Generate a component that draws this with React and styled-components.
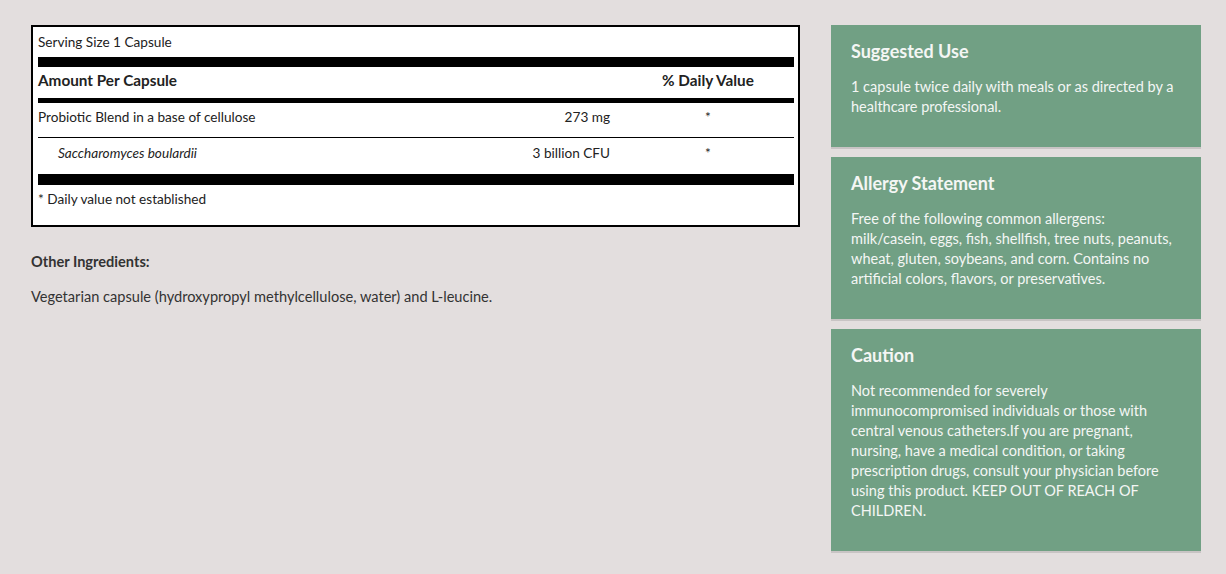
import React from "react";
import styled, { createGlobalStyle } from "styled-components";

const Global = createGlobalStyle`
  html, body { margin: 0; padding: 0; background: #e3dede; }
  body { font-family: Lato, "Open Sans", sans-serif; color: #333; }
  * { box-sizing: border-box; }
`;

const Page = styled.div`
  display: flex;
  align-items: flex-start;
  gap: 31px;
  padding: 25px 25px 20px 31px;
  min-height: 574px;
`;

const Left = styled.div`
  width: 769px;
  flex: none;
`;

const Facts = styled.div`
  border: 2px solid #000;
  background: #fff;
  padding: 0 4px 0 5px;
  color: #222;
  font-size: 13.6px;
`;

const Serving = styled.div`
  height: 30px;
  line-height: 30px;
`;

const Bar = styled.div`
  height: ${(p) => p.$h}px;
  background: #000;
`;

const Row = styled.div`
  display: grid;
  grid-template-columns: 1fr 160px 172px;
  align-items: center;
  height: ${(p) => p.$h}px;
  padding-bottom: ${(p) => p.$pb || 0}px;
  border-bottom: ${(p) => (p.$line ? "1px solid #000" : "none")};
  font-weight: ${(p) => (p.$bold ? 700 : 400)};
  font-size: ${(p) => (p.$bold ? "15.3px" : "inherit")};
`;

const Name = styled.div`
  padding-left: ${(p) => (p.$indent ? 20 : 0)}px;
  font-style: ${(p) => (p.$italic ? "italic" : "normal")};
`;

const Amount = styled.div`
  text-align: right;
  padding-right: 12px;
`;

const DV = styled.div`
  text-align: center;
`;

const Footnote = styled.div`
  padding: 4px 0 16px;
  line-height: 20px;
`;

const OtherTitle = styled.h4`
  margin: 25px 0 0;
  font-size: 14.6px;
  font-weight: 700;
  line-height: 20px;
  color: #333;
`;

const OtherText = styled.p`
  margin: 15px 0 0;
  font-size: 14.6px;
  line-height: 20px;
  color: #333;
`;

const Right = styled.div`
  width: 370px;
  flex: none;
  display: flex;
  flex-direction: column;
  gap: 10px;
`;

const Panel = styled.section`
  background: #71a084;
  box-shadow: 0 2px 0 #c8c4c4;
  padding: 15px 20px 30px;
  color: #f4f6f4;
`;

const PanelTitle = styled.h3`
  margin: 0 0 15px;
  font-size: 18px;
  line-height: 22px;
  font-weight: 700;
`;

const PanelText = styled.p`
  margin: 0;
  font-size: 14.5px;
  line-height: 20px;
`;

export default function App() {
  return (
    <>
      <Global />
      <Page>
        <Left>
          <Facts>
            <Serving>Serving Size 1 Capsule</Serving>
            <Bar $h={10} />
            <Row $h={31} $pb={5} $bold>
              <Name>Amount Per Capsule</Name>
              <Amount />
              <DV>% Daily Value</DV>
            </Row>
            <Bar $h={5} />
            <Row $h={35} $pb={6} $line>
              <Name>Probiotic Blend in a base of cellulose</Name>
              <Amount>273 mg</Amount>
              <DV>*</DV>
            </Row>
            <Row $h={36} $pb={6}>
              <Name $indent $italic>Saccharomyces boulardii</Name>
              <Amount>3 billion CFU</Amount>
              <DV>*</DV>
            </Row>
            <Bar $h={11} />
            <Footnote>* Daily value not established</Footnote>
          </Facts>
          <OtherTitle>Other Ingredients:</OtherTitle>
          <OtherText>
            Vegetarian capsule (hydroxypropyl methylcellulose, water) and L-leucine.
          </OtherText>
        </Left>
        <Right>
          <Panel>
            <PanelTitle>Suggested Use</PanelTitle>
            <PanelText>
              1 capsule twice daily with meals or as directed by a healthcare professional.
            </PanelText>
          </Panel>
          <Panel>
            <PanelTitle>Allergy Statement</PanelTitle>
            <PanelText>
              Free of the following common allergens: milk/casein, eggs, fish, shellfish, tree
              nuts, peanuts, wheat, gluten, soybeans, and corn. Contains no artificial colors,
              flavors, or preservatives.
            </PanelText>
          </Panel>
          <Panel>
            <PanelTitle>Caution</PanelTitle>
            <PanelText>
              Not recommended for severely immunocompromised individuals or those with central
              venous catheters.If you are pregnant, nursing, have a medical condition, or taking
              prescription drugs, consult your physician before using this product. KEEP OUT OF
              REACH OF CHILDREN.
            </PanelText>
          </Panel>
        </Right>
      </Page>
    </>
  );
}
